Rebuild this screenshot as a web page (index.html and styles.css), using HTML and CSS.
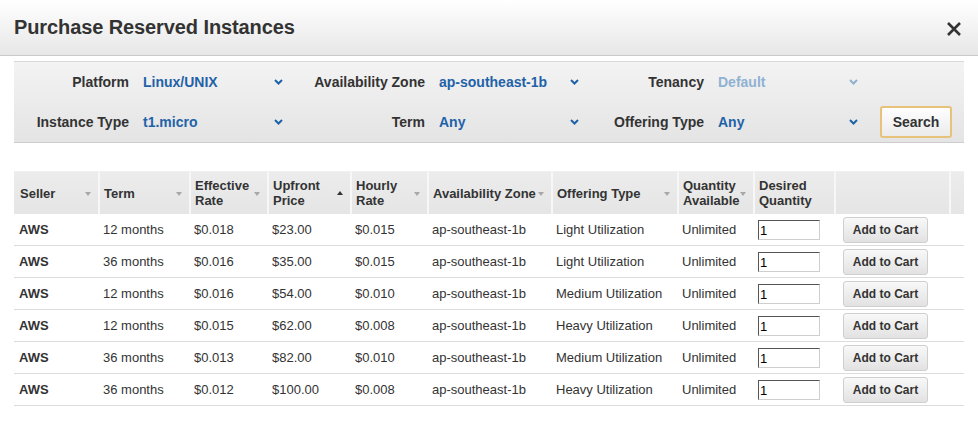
FILE: index.html
```html
<!DOCTYPE html>
<html lang="en">
<head>
<meta charset="utf-8">
<title>Purchase Reserved Instances</title>
<link rel="stylesheet" href="styles.css">
</head>
<body>
<div class="titlebar">
  <h1 class="title">Purchase Reserved Instances</h1>
  <svg class="close" width="16" height="16" viewBox="0 0 16 16"><path d="M2 2L14 14M14 2L2 14" stroke="#333" stroke-width="2.6" fill="none"/></svg>
</div>

<div class="filters">
  <div class="lbl">Platform</div>
  <div class="sel"><span>Linux/UNIX</span><svg class="chev" width="9" height="6" viewBox="0 0 9 6"><path d="M1 1L4.5 4.5L8 1" stroke="currentColor" stroke-width="2" fill="none"/></svg></div>
  <div class="lbl">Availability Zone</div>
  <div class="sel"><span>ap-southeast-1b</span><svg class="chev" width="9" height="6" viewBox="0 0 9 6"><path d="M1 1L4.5 4.5L8 1" stroke="currentColor" stroke-width="2" fill="none"/></svg></div>
  <div class="lbl">Tenancy</div>
  <div class="sel disabled"><span>Default</span><svg class="chev" width="9" height="6" viewBox="0 0 9 6"><path d="M1 1L4.5 4.5L8 1" stroke="currentColor" stroke-width="2" fill="none"/></svg></div>
  <div></div>

  <div class="lbl">Instance Type</div>
  <div class="sel"><span>t1.micro</span><svg class="chev" width="9" height="6" viewBox="0 0 9 6"><path d="M1 1L4.5 4.5L8 1" stroke="currentColor" stroke-width="2" fill="none"/></svg></div>
  <div class="lbl">Term</div>
  <div class="sel"><span>Any</span><svg class="chev" width="9" height="6" viewBox="0 0 9 6"><path d="M1 1L4.5 4.5L8 1" stroke="currentColor" stroke-width="2" fill="none"/></svg></div>
  <div class="lbl">Offering Type</div>
  <div class="sel"><span>Any</span><svg class="chev" width="9" height="6" viewBox="0 0 9 6"><path d="M1 1L4.5 4.5L8 1" stroke="currentColor" stroke-width="2" fill="none"/></svg></div>
  <div class="btn-cell"><button class="search">Search</button></div>
</div>

<table class="offers">
  <colgroup>
    <col style="width:84px"><col style="width:91px"><col style="width:78px"><col style="width:83px"><col style="width:77px"><col style="width:124px"><col style="width:126px"><col style="width:76px"><col style="width:81px"><col style="width:115px"><col style="width:15px">
  </colgroup>
  <thead>
    <tr>
      <th class="first"><div class="th-in"><span>Seller</span><i class="dn"></i></div></th>
      <th><div class="th-in"><span>Term</span><i class="dn"></i></div></th>
      <th><div class="th-in"><span>Effective<br>Rate</span><i class="dn"></i></div></th>
      <th><div class="th-in"><span>Upfront<br>Price</span><i class="up"></i></div></th>
      <th><div class="th-in"><span>Hourly<br>Rate</span><i class="dn"></i></div></th>
      <th><div class="th-in"><span>Availability Zone</span><i class="dn"></i></div></th>
      <th><div class="th-in"><span>Offering Type</span><i class="dn"></i></div></th>
      <th><div class="th-in low"><span>Quantity<br>Available</span><i class="dn"></i></div></th>
      <th><div class="th-in"><span>Desired<br>Quantity</span></div></th>
      <th></th>
      <th></th>
    </tr>
  </thead>
  <tbody>
    <tr><td class="b">AWS</td><td>12 months</td><td>$0.018</td><td>$23.00</td><td>$0.015</td><td>ap-southeast-1b</td><td>Light Utilization</td><td>Unlimited</td><td><input class="qty" value="1"></td><td><button class="cart">Add to Cart</button></td><td></td></tr>
    <tr><td class="b">AWS</td><td>36 months</td><td>$0.016</td><td>$35.00</td><td>$0.015</td><td>ap-southeast-1b</td><td>Light Utilization</td><td>Unlimited</td><td><input class="qty" value="1"></td><td><button class="cart">Add to Cart</button></td><td></td></tr>
    <tr><td class="b">AWS</td><td>12 months</td><td>$0.016</td><td>$54.00</td><td>$0.010</td><td>ap-southeast-1b</td><td>Medium Utilization</td><td>Unlimited</td><td><input class="qty" value="1"></td><td><button class="cart">Add to Cart</button></td><td></td></tr>
    <tr><td class="b">AWS</td><td>12 months</td><td>$0.015</td><td>$62.00</td><td>$0.008</td><td>ap-southeast-1b</td><td>Heavy Utilization</td><td>Unlimited</td><td><input class="qty" value="1"></td><td><button class="cart">Add to Cart</button></td><td></td></tr>
    <tr><td class="b">AWS</td><td>36 months</td><td>$0.013</td><td>$82.00</td><td>$0.010</td><td>ap-southeast-1b</td><td>Medium Utilization</td><td>Unlimited</td><td><input class="qty" value="1"></td><td><button class="cart">Add to Cart</button></td><td></td></tr>
    <tr><td class="b">AWS</td><td>36 months</td><td>$0.012</td><td>$100.00</td><td>$0.008</td><td>ap-southeast-1b</td><td>Heavy Utilization</td><td>Unlimited</td><td><input class="qty" value="1"></td><td><button class="cart">Add to Cart</button></td><td></td></tr>
  </tbody>
</table>
</body>
</html>
```

FILE: styles.css
```css
* { box-sizing: border-box; }
html, body { margin: 0; padding: 0; background: #fff; }
body {
  font-family: "Liberation Sans", Arial, sans-serif;
  color: #333;
  width: 978px;
  height: 446px;
  overflow: hidden;
}

.titlebar {
  height: 56px;
  border-bottom: 1px solid #c9c9c9;
  background: linear-gradient(#ffffff, #e7e7e7);
  display: flex;
  align-items: center;
  justify-content: space-between;
  padding: 0 16px 0 14px;
}
.title {
  margin: 0;
  font-size: 20px;
  font-weight: bold;
  color: #333;
  letter-spacing: -0.1px;
}
.close { display: block; margin-top: 2px; }

.filters {
  margin: 5px 14px 0;
  border-top: 1px solid #d9d9d9;
  border-bottom: 1px solid #cdcdcd;
  background: linear-gradient(#f3f3f3, #e4e4e4);
  display: grid;
  grid-template-columns: 115px 140px 128px 140px 111px 140px auto;
  grid-template-rows: 40px 40px;
  column-gap: 14px;
  align-items: center;
}
.lbl {
  text-align: right;
  font-size: 14px;
  font-weight: bold;
  color: #333;
  white-space: nowrap;
}
.sel {
  display: flex;
  align-items: center;
  justify-content: space-between;
  font-size: 14px;
  font-weight: bold;
  color: #1f62a7;
}
.sel .chev { display: block; color: #1f62a7; }
.sel.disabled, .sel.disabled .chev { color: #8fb2d3; }
.btn-cell { padding-left: 8px; }
.search {
  width: 72px;
  height: 32px;
  border: 2px solid #e6c27a;
  border-radius: 3px;
  background: linear-gradient(#fefefe, #ebebeb);
  font-family: "Liberation Sans", Arial, sans-serif;
  font-size: 14px;
  font-weight: bold;
  color: #333;
  padding: 0;
}

.offers {
  margin: 28px 14px 0;
  width: 950px;
  table-layout: fixed;
  border-collapse: separate;
  border-spacing: 0;
}
.offers th {
  height: 43px;
  padding: 0 0 0 4px;
  border-left: 2px solid #f7f7f7;
  background: linear-gradient(#ececec, #e5e5e5);
  border-top: 1px solid #f0f0f0;
  text-align: left;
  font-size: 13px;
  font-weight: bold;
  line-height: 15px;
  color: #333;
  vertical-align: middle;
}
.offers th.first { border-left: none; padding-left: 6px; }
.th-in {
  display: flex;
  align-items: center;
  justify-content: space-between;
  padding-right: 7px;
  white-space: nowrap;
}
.th-in.low i { margin-top: 12px; }
.th-in i {
  display: block;
  width: 0;
  height: 0;
  flex: none;
  border-left: 3.5px solid transparent;
  border-right: 3.5px solid transparent;
}
.th-in i.dn { border-top: 4px solid #a8a8a8; margin-top: 2px; }
.th-in i.up { border-bottom: 4px solid #333; margin-top: -1px; }

.offers td {
  height: 32px;
  padding: 0 0 0 5px;
  border-bottom: 1px solid #dcdcdc;
  font-size: 13px;
  color: #333;
  vertical-align: middle;
  white-space: nowrap;
}
.offers td.b { font-weight: bold; }
.qty {
  display: block;
  width: 62px;
  height: 20px;
  border: 1px solid;
  border-color: #555 #cfcfcf #cfcfcf #555;
  font-family: "Liberation Sans", Arial, sans-serif;
  font-size: 13px;
  color: #000;
  padding: 0 1px;
  margin-top: 1px;
}
.cart {
  display: block;
  margin-left: 4px;
  width: 85px;
  height: 26px;
  border: 1px solid #cfcfcf;
  border-radius: 3px;
  background: linear-gradient(#f8f8f8, #e2e2e2);
  font-family: "Liberation Sans", Arial, sans-serif;
  font-size: 12px;
  font-weight: bold;
  color: #333;
  padding: 0;
}
```
